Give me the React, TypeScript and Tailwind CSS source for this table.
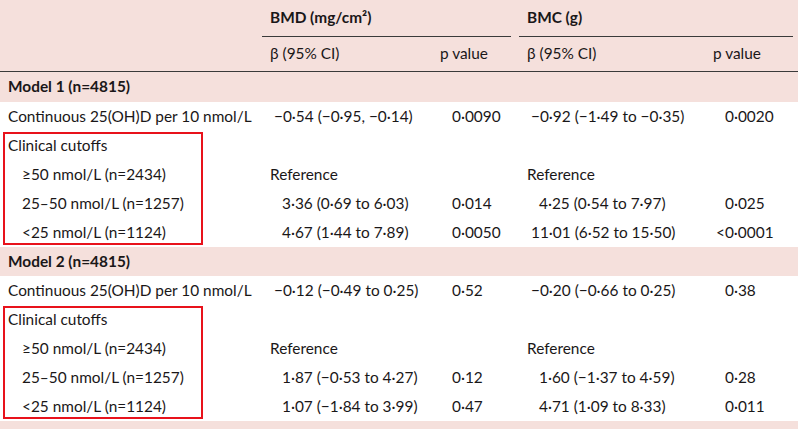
import React from 'react';

type Row = {
  label: string;
  indent?: boolean;
  bmd?: string;
  bmdPad?: string;
  bmdP?: string;
  bmc?: string;
  bmcPad?: string;
  bmcP?: string;
  bmcPPad?: string;
};

const model1: Row[] = [
  { label: 'Continuous 25(OH)D per 10 nmol/L', bmd: '−0·54 (−0·95, −0·14)', bmdPad: 'pl-[12px]', bmdP: '0·0090', bmc: '−0·92 (−1·49 to −0·35)', bmcPad: 'pl-[12px]', bmcP: '0·0020' },
];

const cutoffs1: Row[] = [
  { label: 'Clinical cutoffs' },
  { label: '≥50 nmol/L (n=2434)', indent: true, bmd: 'Reference', bmdPad: 'pl-[8px]', bmc: 'Reference', bmcPad: 'pl-[8px]' },
  { label: '25–50 nmol/L (n=1257)', indent: true, bmd: '3·36 (0·69 to 6·03)', bmdPad: 'pl-[20px]', bmdP: '0·014', bmc: '4·25 (0·54 to 7·97)', bmcPad: 'pl-[20px]', bmcP: '0·025' },
  { label: '<25 nmol/L (n=1124)', indent: true, bmd: '4·67 (1·44 to 7·89)', bmdPad: 'pl-[20px]', bmdP: '0·0050', bmc: '11·01 (6·52 to 15·50)', bmcPad: 'pl-[12px]', bmcP: '<0·0001', bmcPPad: 'pl-[11px]' },
];

const model2: Row[] = [
  { label: 'Continuous 25(OH)D per 10 nmol/L', bmd: '−0·12 (−0·49 to 0·25)', bmdPad: 'pl-[12px]', bmdP: '0·52', bmc: '−0·20 (−0·66 to 0·25)', bmcPad: 'pl-[12px]', bmcP: '0·38' },
];

const cutoffs2: Row[] = [
  { label: 'Clinical cutoffs' },
  { label: '≥50 nmol/L (n=2434)', indent: true, bmd: 'Reference', bmdPad: 'pl-[8px]', bmc: 'Reference', bmcPad: 'pl-[8px]' },
  { label: '25–50 nmol/L (n=1257)', indent: true, bmd: '1·87 (−0·53 to 4·27)', bmdPad: 'pl-[20px]', bmdP: '0·12', bmc: '1·60 (−1·37 to 4·59)', bmcPad: 'pl-[20px]', bmcP: '0·28' },
  { label: '<25 nmol/L (n=1124)', indent: true, bmd: '1·07 (−1·84 to 3·99)', bmdPad: 'pl-[20px]', bmdP: '0·47', bmc: '4·71 (1·09 to 8·33)', bmcPad: 'pl-[20px]', bmcP: '0·011' },
];

const DataRow = ({ row }: { row: Row }) => (
  <div className="flex h-[29px] items-center whitespace-nowrap">
    <div className={`w-[262px] ${row.indent ? 'pl-[22px]' : 'pl-[8px]'}`}>{row.label}</div>
    <div className={`w-[178px] ${row.bmdPad ?? ''}`}>{row.bmd}</div>
    <div className="w-[79px] pl-[12px]">{row.bmdP}</div>
    <div className={`w-[186px] ${row.bmcPad ?? ''}`}>{row.bmc}</div>
    <div className={`flex-1 ${row.bmcPPad ?? 'pl-[20px]'}`}>{row.bmcP}</div>
  </div>
);

const ModelRow = ({ title }: { title: string }) => (
  <div className="flex h-[29px] items-center bg-[#f5e0dc] pl-[8px] font-bold">{title}</div>
);

const Boxed = ({ rows }: { rows: Row[] }) => (
  <div className="relative">
    {rows.map((r) => (
      <DataRow key={r.label} row={r} />
    ))}
    <div className="pointer-events-none absolute left-[3px] top-[1px] h-[113px] w-[200px] border-2 border-[#e8121b]" />
  </div>
);

export default function App() {
  return (
    <div
      className="h-[429px] w-[798px] overflow-hidden bg-white text-[15.4px] text-[#1a1718]"
      style={{ fontFamily: 'Lato, "Open Sans", sans-serif' }}
    >
      <div className="bg-[#f5e0dc]">
        <div className="flex h-[37px] items-center whitespace-nowrap">
          <div className="w-[262px]" />
          <div className="flex h-full w-[249px] items-center border-b border-[#3a3a3a] pl-[8px] font-bold">
            BMD (mg/cm²)
          </div>
          <div className="w-[8px]" />
          <div className="flex h-full w-[274px] items-center border-b border-[#3a3a3a] pl-[8px] font-bold">
            BMC (g)
          </div>
        </div>
        <div className="flex h-[35px] items-center whitespace-nowrap border-b border-[#3a3a3a]">
          <div className="w-[262px]" />
          <div className="w-[178px] pl-[8px]">β (95% CI)</div>
          <div className="w-[79px]">p value</div>
          <div className="w-[194px] pl-[8px]">β (95% CI)</div>
          <div className="flex-1">p value</div>
        </div>
        <div className="flex h-[30px] items-center pl-[8px] font-bold">Model 1 (n=4815)</div>
      </div>
      {model1.map((r) => (
        <DataRow key={r.label} row={r} />
      ))}
      <Boxed rows={cutoffs1} />
      <ModelRow title="Model 2 (n=4815)" />
      {model2.map((r) => (
        <DataRow key={r.label} row={r} />
      ))}
      <Boxed rows={cutoffs2} />
      <div className="h-[10px] bg-[#f5e0dc]" />
    </div>
  );
}
